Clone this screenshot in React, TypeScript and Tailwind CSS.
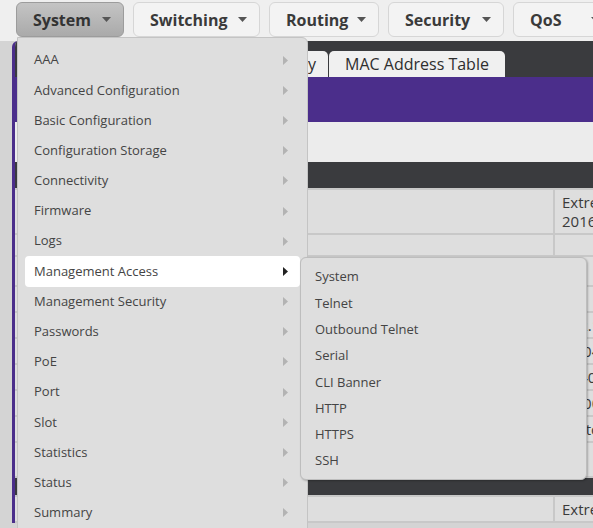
import { useState } from "react";

const FONT = { fontFamily: '"Open Sans", "Liberation Sans", sans-serif' };

const NAV = [
  { label: "System", w: "w-[108px]", active: true },
  { label: "Switching", w: "w-[127px]" },
  { label: "Routing", w: "w-[110px]" },
  { label: "Security", w: "w-[116px]" },
  { label: "QoS", w: "w-[100px]" },
];

const MENU = [
  "AAA",
  "Advanced Configuration",
  "Basic Configuration",
  "Configuration Storage",
  "Connectivity",
  "Firmware",
  "Logs",
  "Management Access",
  "Management Security",
  "Passwords",
  "PoE",
  "Port",
  "Slot",
  "Statistics",
  "Status",
  "Summary",
];

const SUB = ["System", "Telnet", "Outbound Telnet", "Serial", "CLI Banner", "HTTP", "HTTPS", "SSH"];

const ROWS = [
  { h: "h-[22px]", v: "" },
  { h: "h-[30px]", v: "" },
  { h: "h-[26px]", v: "" },
  { h: "h-[26px]", v: "192.168.0.1" },
  { h: "h-[26px]", v: "00:04:96:(" },
  { h: "h-[26px]", v: "X440-G2-5" },
  { h: "h-[26px]", v: "00:00:00:(" },
  { h: "h-[26px]", v: "Switch la" },
  { h: "h-[35px]", v: "" },
];

function Caret() {
  return (
    <svg width="9" height="5" viewBox="0 0 9 5" className="shrink-0">
      <path d="M0 0h9L4.5 5z" fill="#555" />
    </svg>
  );
}

function Arrow({ dark }: { dark?: boolean }) {
  return (
    <svg width="5" height="9" viewBox="0 0 5 9" className="shrink-0">
      <path d="M0 0l5 4.5L0 9z" fill={dark ? "#222" : "#b3b3b3"} />
    </svg>
  );
}

export default function App() {
  const [hover] = useState("Management Access");

  return (
    <div className="relative w-[593px] h-[528px] overflow-hidden bg-[#d4d4d4] text-[#444]" style={FONT}>
      {/* top nav */}
      <div className="h-[41px] bg-[#efefef] flex items-start gap-[9px] pl-[16px] pt-[2px]">
        {NAV.map((n) => (
          <div
            key={n.label}
            className={`${n.w} shrink-0 h-[35px] rounded-[6px] border flex items-center justify-between pl-[16px] pr-[12px] text-[16px] font-bold ${
              n.active
                ? "bg-gradient-to-b from-[#c4c4c4] to-[#aaaaaa] border-[#9c9c9c] text-[#333]"
                : "bg-[#f3f3f3] border-[#d6d6d6] text-[#3a3a3a]"
            }`}
          >
            <span>{n.label}</span>
            <Caret />
          </div>
        ))}
      </div>

      {/* page body */}
      <div className="flex">
        <div className="w-[12px] shrink-0" />
        <div className="flex-1 border-l-[3px] border-[#4b2e8b] rounded-tl-[6px] bg-[#dedede] overflow-hidden">
          <div className="h-[36px] bg-[#3a3b3e] flex items-end gap-[1px] pl-[193px]">
            <div className="w-[120px] shrink-0 h-[26px] rounded-t-[5px] bg-[#f0f0f0] pr-[12px] flex items-center justify-end text-[16px] text-[#2e2e2e]">
              Inventory
            </div>
            <div className="w-[176px] shrink-0 h-[26px] rounded-t-[5px] bg-[#f0f0f0] flex items-center justify-center text-[16px] font-medium text-[#2e2e2e]">
              MAC Address Table
            </div>
          </div>
          <div className="h-[45px] bg-[#4b2e8b]" />
          <div className="h-[40px] bg-[#ececec]" />
          <div className="h-[26px] bg-[#3a3b3e]" />
          <div className="border-t-2 border-[#c8c8c8]">
            <div className="flex h-[45px] border-b-2 border-[#c8c8c8]">
              <div className="w-[540px] shrink-0 border-r-2 border-[#c8c8c8]" />
              <div className="pl-[7px] pt-[3px] text-[15px] leading-[19px] whitespace-nowrap text-[#3a3a3a]">
                <div>ExtremeXOS</div>
                <div>2016</div>
              </div>
            </div>
            {ROWS.map((r, i) => (
              <div key={i} className={`flex ${r.h} border-b-2 border-[#c8c8c8]`}>
                <div className="w-[540px] shrink-0 border-r-2 border-[#c8c8c8]" />
                <div className="pl-[7px] flex items-center text-[15px] whitespace-nowrap text-[#3a3a3a]">{r.v}</div>
              </div>
            ))}
            <div className="h-[17px] bg-[#3a3b3e]" />
            <div className="flex h-[28px] border-t-2 border-b-2 border-[#c8c8c8]">
              <div className="w-[540px] shrink-0 border-r-2 border-[#c8c8c8]" />
              <div className="pl-[7px] flex items-center text-[15px] whitespace-nowrap text-[#3a3a3a]">ExtremeXOS</div>
            </div>
          </div>
        </div>
      </div>

      {/* System dropdown */}
      <div className="absolute left-[17px] top-[37px] w-[291px] h-[520px] bg-[#dedede] border border-[#c4c4c4] rounded-tr-[6px] pt-[7px] pl-[7px] pr-[7px]">
        {MENU.map((m) => {
          const on = m === hover;
          return (
            <div
              key={m}
              className={`h-[30.2px] flex items-center justify-between pl-[9px] pr-[12px] text-[13px] rounded-[4px] ${
                on ? "bg-white" : ""
              }`}
            >
              <span>{m}</span>
              <Arrow dark={on} />
            </div>
          );
        })}
      </div>

      {/* Management Access submenu */}
      <div className="absolute left-[300px] top-[257px] w-[287px] h-[223px] bg-[#dedede] border border-[#bdbdbd] rounded-[6px] shadow-[1px_1px_2px_rgba(0,0,0,0.25)] pt-[6px]">
        {SUB.map((s) => (
          <div key={s} className="h-[26.3px] flex items-center pl-[14px] text-[13px]">
            {s}
          </div>
        ))}
      </div>
    </div>
  );
}
